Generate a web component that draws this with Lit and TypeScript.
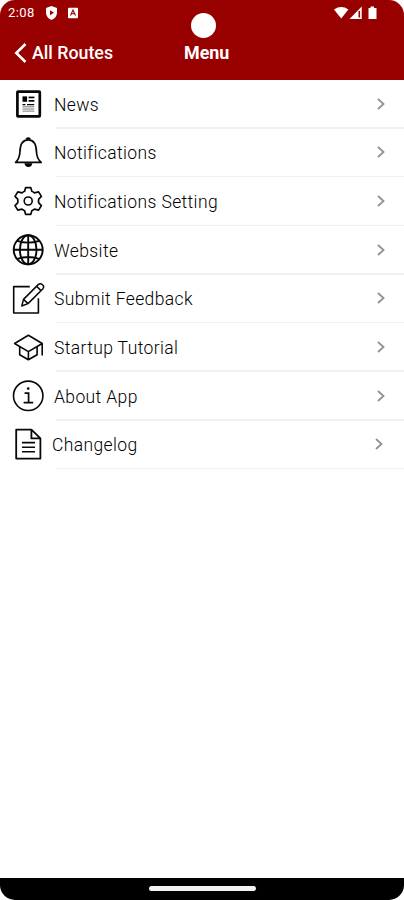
import { LitElement, html, svg, css } from "lit";
import { customElement } from "lit/decorators.js";

const icons = {
  news: svg`
    <rect x="6.4" y="4.7" width="22.4" height="24.6" rx=".6" stroke-width="2.7"/>
    <g fill="#000" stroke="none">
      <rect x="11.5" y="9.4" width="4.6" height="5.4"/>
      <rect x="17.6" y="9.6" width="5.8" height="1.7"/>
      <rect x="17.6" y="13" width="5.8" height="1.7"/>
    </g>
    <path d="M11.5 17.6h3m1.5 0h7.2" stroke-width="1.2"/>
    <path d="M11.5 19.8h11.8M11.5 22h11.8M11.5 24.1h11.8" stroke="#777" stroke-width="1"/>`,
  bell: svg`
    <path d="M15.4 4.3Q17.2 2.6 19 4.3" stroke-width="2.4"/>
    <path d="M4.6 27.4C7.6 24.6 8.7 22 8.9 17C9.1 9.4 11.4 4.8 17.2 4.8S25.3 9.4 25.5 17C25.7 22 26.8 24.6 30.2 27.4Z" stroke-width="1.7" stroke-linejoin="round"/>
    <path d="M13.4 28.2H21.4Q20.8 31.9 17.4 32Q14 31.9 13.4 28.2Z" fill="#000" stroke="none"/>`,
  gear: svg`
    <circle cx="17.2" cy="17" r="4" stroke-width="1.6"/>
    <path d="M14.6 3.7H19.8L20.8 7.3Q22 7.7 23.4 8.8L27.6 7.9L30.4 12.4L27.7 15.2Q27.3 17 27.7 18.8L30.4 21.6L27.6 26.1L23.4 25.2Q22 26.3 20.8 26.7L19.8 30.3H14.6L13.6 26.7Q12.400 26.3 11 25.2L6.8 26.1L4 21.6L6.7 18.8Q7.100 17 6.7 15.2L4 12.4L6.8 7.9L11 8.8Q12.400 7.7 13.6 7.3Z" stroke-width="1.7" stroke-linejoin="round"/>`,
  globe: svg`
    <g stroke-width="1.9">
      <circle cx="17.2" cy="16.8" r="14.5"/>
      <ellipse cx="17.2" cy="16.8" rx="8.3" ry="14.5"/>
      <path d="M17.2 2.3V31.3M2.7 16.8H31.7M6.2 7.8Q17.2 11.4 28.2 7.8M6.2 25.8Q17.2 22.2 28.2 25.8"/>
    </g>`,
  edit: svg`
    <path d="M18.8 5.6H2.7V32H27.4V17.2" stroke-width="1.6" stroke-linejoin="round"/>
    <path d="M10.8 25L12.5 18.4L27.2 3.6Q29.3 1.7 31.5 3.7T31.7 8L17 22.6ZM12.5 18.4L17 22.6M25.6 5.2L30 9.6" stroke-width="1.5" stroke-linejoin="round"/>`,
  cap: svg`
    <path d="M17.4 5.2L31.2 13.5L17.4 21.6L3.6 13.5ZM8.700 16.7V24.7L17.4 29.7L26.1 24.7V16.7M17.4 21.6V29.7M31.2 13.5V25.6" stroke-width="1.6" stroke-linejoin="round"/>`,
  info: svg`
    <circle cx="17.2" cy="16.8" r="14.7" stroke-width="1.6"/>
    <path d="M13.6 14.2H17.6V23.4M12.6 23.6H22.2" stroke-width="1.7"/>
    <circle cx="17.2" cy="9.6" r="1.3" fill="#000" stroke="none"/>`,
  doc: svg`
    <path d="M20.4 2.7H5.2V31.6H29.4V11.4L20.4 2.7V11.4H29.4" stroke-width="1.8" stroke-linejoin="round"/>
    <path d="M11 15.6H24M11 20.2H24M11 24.8H24" stroke-width="1.6"/>`,
};

const items: { label: string; icon: keyof typeof icons; last?: boolean }[] = [
  { label: "News", icon: "news" },
  { label: "Notifications", icon: "bell" },
  { label: "Notifications Setting", icon: "gear" },
  { label: "Website", icon: "globe" },
  { label: "Submit Feedback", icon: "edit" },
  { label: "Startup Tutorial", icon: "cap" },
  { label: "About App", icon: "info" },
  { label: "Changelog", icon: "doc", last: true },
];

@customElement("app-root")
export class AppRoot extends LitElement {
  static styles = css`
    :host {
      display: flex;
      flex-direction: column;
      height: 900px;
      overflow: hidden;
      background: #fff;
      border-radius: 15px;
      font-family: Roboto, "Liberation Sans", sans-serif;
    }
    svg { display: block; flex: none; }
    .top {
      position: relative;
      box-sizing: border-box;
      height: 79.5px;
      flex: none;
      background: #980000;
      color: #fff;
    }
    .status {
      display: flex;
      align-items: center;
      height: 25px;
      padding: 0 25px 0 8px;
      font-size: 13px;
      letter-spacing: 0.45px;
    }
    .time { width: 37px; }
    .right { margin-left: auto; }
    .camera {
      position: absolute;
      left: 190.5px;
      top: 12.5px;
      width: 25px;
      height: 25px;
      border-radius: 50%;
      background: #fff;
    }
    .nav {
      display: grid;
      grid-template-columns: 184px 1fr;
      align-items: center;
      height: 55px;
    }
    .back {
      display: flex;
      align-items: center;
      gap: 5px;
      padding-left: 14px;
      font-weight: 500;
      font-size: 17.8px;
    }
    .title { font-weight: 700; font-size: 17.9px; }
    .list { flex: 1; }
    .row {
      display: flex;
      align-items: center;
      height: 48.65px;
      padding-left: 11px;
      position: relative;
    }
    .row::after {
      content: "";
      position: absolute;
      left: 56px;
      right: 0;
      bottom: -0.6px;
      height: 1.5px;
      background: #f0f0f0;
    }
    .icon { fill: none; stroke: #080808; }
    .label {
      flex: 1;
      margin-left: 9px;
      padding-top: 2px;
      font-size: 17.5px;
      font-weight: 300;
      letter-spacing: 0.38px;
      color: #000;
    }
    .chevron { margin-right: 18px; }
    .last .label { margin-left: 7px; }
    .last .chevron { margin-right: 20px; }
    .home {
      display: flex;
      justify-content: center;
      align-items: center;
      height: 22.5px;
      flex: none;
      background: #000;
    }
    .handle {
      width: 107px;
      height: 5px;
      border-radius: 3px;
      background: #f2f2f2;
    }
  `;

  render() {
    return html`
      <div class="top">
        <div class="status">
          <span class="time">2:08</span>
          <svg width="36" height="16" viewBox="0 0 36 16" fill="#fff">
            <path d="M6.5 1L12 3V8Q11.6 13 6.5 15Q1.400 13 1 8V3Z" />
            <path d="M5 5.200L9 7.700L5 10.200Z" fill="#980000" />
            <rect x="23" y="2.800" width="10" height="10.500" rx="1" />
            <path d="M25.500 10.500L28 5L30.500 10.500M26.500 8.800H29.500" fill="none" stroke="#980000" stroke-width="1.100" />
          </svg>
          <svg class="right" width="45" height="16" viewBox="0 0 45 16" fill="#fff">
            <path d="M0 4.400Q7.200-.5 14.400 4.400L7.200 13.500Z" />
            <path d="M27.700 1.500V14H15.500Z" />
            <rect x="24.500" y="6" width="1.600" height="6.500" fill="#980000" />
            <path d="M36.500 1.500H40V3H42.500V14H34.500V3H36.500Z" />
          </svg>
        </div>
        <div class="nav">
          <div class="back">
            <svg width="13" height="22" viewBox="0 0 13 22" fill="none" stroke="#fff" stroke-width="2.600">
              <path d="M11.500 2L2.300 11L11.500 20" />
            </svg>
            <span>All Routes</span>
          </div>
          <span class="title">Menu</span>
        </div>
        <div class="camera"></div>
      </div>
      <div class="list">
        ${items.map(
          (item) => html`
            <div class="row ${item.last ? "last" : ""}">
              <svg class="icon" width="34" height="34" viewBox="0 0 34 34">${icons[item.icon]}</svg>
              <span class="label">${item.label}</span>
              <svg class="chevron" width="10" height="14" viewBox="0 0 10 14" fill="none" stroke="#929292" stroke-width="1.800">
                <path d="M2 2L7.500 7L2 12" />
              </svg>
            </div>
          `,
        )}
      </div>
      <div class="home"><div class="handle"></div></div>
    `;
  }
}
